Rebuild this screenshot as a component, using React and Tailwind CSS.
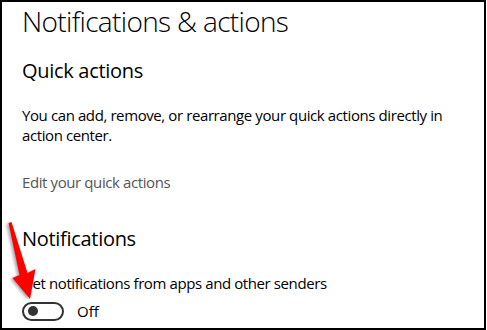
export default function App() {
  return (
    <div className="relative w-[487px] h-[330px] bg-white overflow-hidden font-['Open_Sans',sans-serif] text-black">
      <div className="w-[486px] h-[330px] border-2 border-black pl-[20px] flex flex-col">
        <h1 className="text-[28px] leading-[36px] font-light mt-[1px] tracking-[-0.65px]">Notifications &amp; actions</h1>
        <h2 className="text-[20px] leading-[26px] mt-[19px] tracking-[-0.3px]">Quick actions</h2>
        <p className="text-[15px] leading-[20px] mt-[21px] w-[440px] tracking-[-0.4px]">
          You can add, remove, or rearrange your quick actions directly in action center.
        </p>
        <div className="text-[15px] leading-[20px] mt-[27px] text-[#555] tracking-[-0.4px]">Edit your quick actions</div>
        <h2 className="text-[20px] leading-[26px] mt-[34px] tracking-[-0.3px]">Notifications</h2>
        <div className="text-[15px] leading-[20px] mt-[21px] tracking-[-0.4px]">Get notifications from apps and other senders</div>
        <div className="flex items-center mt-[8px] gap-[13px]">
          <div className="w-[42px] h-[19px] rounded-full border-2 border-[#333] flex items-center pl-[4px]">
            <div className="w-[10px] h-[10px] rounded-full bg-[#333]" />
          </div>
          <span className="text-[15px] leading-[20px]">Off</span>
        </div>
      </div>
      <svg className="absolute left-0 top-[218px]" width="50" height="90" viewBox="0 0 50 90">
        <defs>
          <filter id="sh" x="-50%" y="-50%" width="200%" height="200%">
            <feGaussianBlur stdDeviation="1.5" />
          </filter>
        </defs>
        <path d="M8.5 5 L11.5 4 L27.5 55 L35.5 51 L30 81 L12.5 60 L19.5 57 Z" fill="#000" opacity="0.35" filter="url(#sh)" transform="translate(-2,1)" />
        <path d="M8.5 5 L11.5 4 L27.5 55 L35.5 51 L30 81 L12.5 60 L19.5 57 Z" fill="#f00" />
      </svg>
    </div>
  );
}
